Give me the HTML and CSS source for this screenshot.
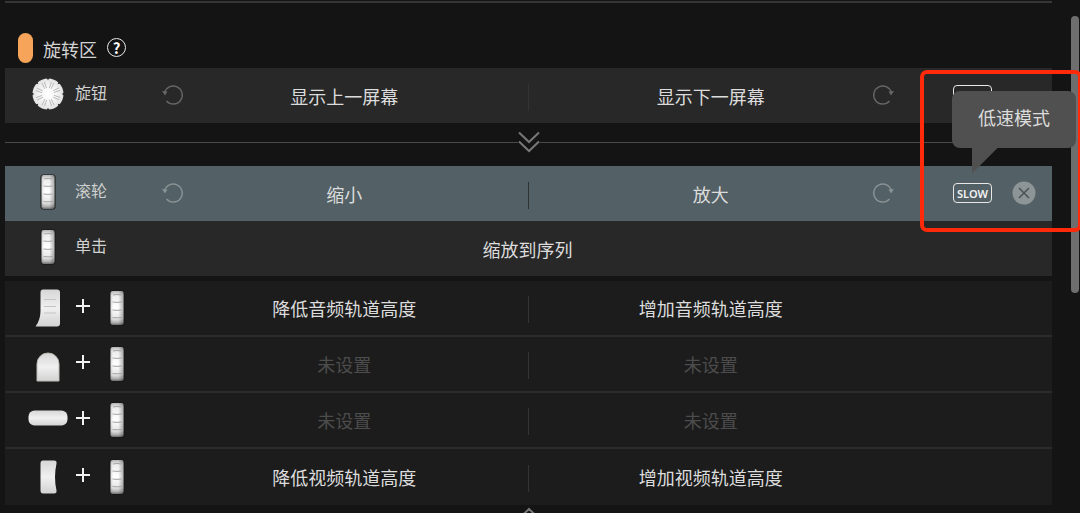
FILE: index.html
```html
<!DOCTYPE html>
<html lang="zh-CN">
<head>
    <meta charset="UTF-8">
    <meta name="viewport" content="width=device-width, initial-scale=1.0">
    <title>旋转区</title>
    <link rel="stylesheet" href="styles.css">
</head>
<body>
    <!-- Shared icons -->
    <svg class="icon-defs" aria-hidden="true">
        <defs>
            <linearGradient id="wheelFill" x1="0" y1="0" x2="0" y2="1">
                <stop offset="0" stop-color="#b4b4b4"/>
                <stop offset="0.12" stop-color="#ececec"/>
                <stop offset="0.5" stop-color="#ffffff"/>
                <stop offset="0.82" stop-color="#e4e4e4"/>
                <stop offset="0.93" stop-color="#b0b0b0"/>
                <stop offset="1" stop-color="#6c6c6c"/>
            </linearGradient>
            <linearGradient id="wheelSide" x1="0" y1="0" x2="1" y2="0">
                <stop offset="0" stop-color="#000" stop-opacity="0.15"/>
                <stop offset="0.2" stop-color="#000" stop-opacity="0"/>
                <stop offset="0.6" stop-color="#000" stop-opacity="0"/>
                <stop offset="1" stop-color="#000" stop-opacity="0.3"/>
            </linearGradient>
            <linearGradient id="keyFill" x1="0" y1="0" x2="0" y2="1">
                <stop offset="0" stop-color="#d6d6d6"/>
                <stop offset="0.5" stop-color="#f0f0f0"/>
                <stop offset="1" stop-color="#d2d2d2"/>
            </linearGradient>
            <radialGradient id="knobFill">
                <stop offset="0" stop-color="#ffffff"/>
                <stop offset="0.5" stop-color="#f6f6f6"/>
                <stop offset="1" stop-color="#e2e2e2"/>
            </radialGradient>
        </defs>
        <symbol id="wheel" viewBox="0 0 16 36">
            <rect x="0.500" y="0.500" width="15" height="35" rx="3" fill="#141414"/>
            <rect x="1.500" y="1" width="13" height="34" rx="2" fill="url(#wheelFill)"/>
            <rect x="1.500" y="1" width="13" height="34" rx="2" fill="url(#wheelSide)"/>
            <path d="M4 5q4-1 8 0M3.500 12q4.500 .800 9 0M3.500 20q4.500 .800 9 0M3.500 27.500q4.500 .800 9 0" fill="none" stroke="#9c9c9c" stroke-width="0.900"/>
        </symbol>
        <symbol id="rotate" viewBox="0 0 22 22">
            <path d="M2.500 9a9 9 0 1 1 2 8" fill="none" stroke="currentColor" stroke-width="1.400"/>
            <path d="M0 7l5.500.500-2.500 4z" fill="currentColor"/>
        </symbol>
        <symbol id="plus" viewBox="0 0 14 14">
            <path d="M7 0v14M0 7h14" stroke="#f2f2f2" stroke-width="2"/>
        </symbol>
    </svg>

    <main class="panel">
        <header class="section-header">
            <span class="section-mark"></span>
            <h2>旋转区</h2>
            <button class="help-button" type="button" aria-label="帮助">?</button>
        </header>

        <!-- Knob -->
        <div class="row row-main">
            <div class="key">
                <span class="key-icon">
                    <svg width="32" height="32" viewBox="0 0 32 32">
                        <circle cx="16" cy="16" r="15.500" fill="url(#knobFill)"/>
                        <g fill="none" stroke="#b0b0b0" stroke-width="0.800">
                            <g id="groove">
                                <path d="M15 10l-.300-6.500M17 10l.300-6.500" transform="rotate(22 16 16)"/>
                                <path d="M14.800 0h2.400l-1.200 2.200z" fill="#282828" stroke="none"/>
                            </g>
                            <use href="#groove" transform="rotate(45 16 16)"/>
                            <use href="#groove" transform="rotate(90 16 16)"/>
                            <use href="#groove" transform="rotate(135 16 16)"/>
                            <use href="#groove" transform="rotate(180 16 16)"/>
                            <use href="#groove" transform="rotate(225 16 16)"/>
                            <use href="#groove" transform="rotate(270 16 16)"/>
                            <use href="#groove" transform="rotate(315 16 16)"/>
                        </g>
                    </svg>
                </span>
                <span class="key-label">旋钮</span>
            </div>
            <div class="action">
                <svg class="turn turn-left"><use href="#rotate"/></svg>
                显示上一屏幕
            </div>
            <div class="action action-right">
                显示下一屏幕
                <svg class="turn turn-right"><use href="#rotate"/></svg>
            </div>
            <div class="tools">
                <button class="slow-button" type="button">SLOW</button>
            </div>
        </div>

        <div class="divider">
            <button class="fold-button" type="button" aria-label="展开">
                <svg width="22" height="22" viewBox="0 0 22 22">
                    <path d="M1 1.500l10 9.500 10-9.500M1 10.500l10 9.500 10-9.500" fill="none" stroke="#777" stroke-width="2"/>
                </svg>
            </button>
        </div>

        <!-- Wheel -->
        <div class="row row-main row-active">
            <div class="key">
                <span class="key-icon"><svg class="wheel"><use href="#wheel"/></svg></span>
                <span class="key-label">滚轮</span>
            </div>
            <div class="action">
                <svg class="turn turn-left"><use href="#rotate"/></svg>
                缩小
            </div>
            <div class="action action-right">
                放大
                <svg class="turn turn-right"><use href="#rotate"/></svg>
            </div>
            <div class="tools">
                <div class="slow-wrap">
                    <button class="slow-button" type="button" aria-describedby="slowTip">SLOW</button>
                    <div class="tooltip" id="slowTip" role="tooltip">低速模式</div>
                </div>
                <button class="clear-button" type="button" aria-label="清除">
                    <svg width="24" height="24" viewBox="0 0 24 24">
                        <circle cx="12" cy="12" r="11.500" fill="#8d9597"/>
                        <path d="M7 7l10 10M17 7L7 17" stroke="#485356" stroke-width="1.500"/>
                    </svg>
                </button>
            </div>
        </div>
        <div class="row row-main">
            <div class="key">
                <span class="key-icon"><svg class="wheel"><use href="#wheel"/></svg></span>
                <span class="key-label">单击</span>
            </div>
            <div class="action action-wide">缩放到序列</div>
        </div>

        <!-- Key + wheel -->
        <div class="combos">
            <div class="row">
                <div class="key">
                    <span class="key-icon">
                        <svg width="26" height="38" viewBox="0 0 26 38">
                            <path d="M8 .500h14q3 0 3 3v31q0 3-3 3H.500Q5.500 31 5.500 22V3.500Q5.500.500 8 .500z" fill="url(#keyFill)"/>
                            <path d="M9 10.500h12M9 17.500h12M9 24h12" stroke="#c4c4c4"/>
                        </svg>
                    </span>
                    <svg class="plus"><use href="#plus"/></svg>
                    <svg class="wheel"><use href="#wheel"/></svg>
                </div>
                <div class="action">降低音频轨道高度</div>
                <div class="action action-right">增加音频轨道高度</div>
            </div>
            <div class="row">
                <div class="key">
                    <span class="key-icon key-icon-low">
                        <svg width="24" height="30" viewBox="0 0 24 30">
                            <path d="M1 29V12a11 11 0 0 1 22 0v17z" fill="url(#keyFill)" stroke="#bcbcb4"/>
                        </svg>
                    </span>
                    <svg class="plus"><use href="#plus"/></svg>
                    <svg class="wheel"><use href="#wheel"/></svg>
                </div>
                <div class="action unset">未设置</div>
                <div class="action action-right unset">未设置</div>
            </div>
            <div class="row">
                <div class="key">
                    <span class="key-icon key-icon-high">
                        <svg width="40" height="16" viewBox="0 0 40 16">
                            <rect x="0.500" y="0.500" width="39" height="15" rx="6" fill="url(#keyFill)"/>
                        </svg>
                    </span>
                    <svg class="plus"><use href="#plus"/></svg>
                    <svg class="wheel"><use href="#wheel"/></svg>
                </div>
                <div class="action unset">未设置</div>
                <div class="action action-right unset">未设置</div>
            </div>
            <div class="row">
                <div class="key">
                    <span class="key-icon">
                        <svg width="17" height="34" viewBox="0 0 17 34">
                            <path d="M3 .500h11q3 0 2.500 3Q13.500 17 16.500 30.500q.500 3-2.500 3H3q-2.500 0-2.500-3v-27Q.500.500 3 .500z" fill="url(#keyFill)"/>
                        </svg>
                    </span>
                    <svg class="plus"><use href="#plus"/></svg>
                    <svg class="wheel"><use href="#wheel"/></svg>
                </div>
                <div class="action">降低视频轨道高度</div>
                <div class="action action-right">增加视频轨道高度</div>
            </div>
        </div>

        <div class="panel-end">
            <button class="fold-button" type="button" aria-label="收起">
                <svg width="22" height="22" viewBox="0 0 22 22">
                    <path d="M1 11.500L11 2l10 9.500M1 20.500L11 11l10 9.500" fill="none" stroke="#777" stroke-width="2"/>
                </svg>
            </button>
        </div>
    </main>

    <div class="scroll-thumb"></div>
    <div class="highlight"></div>
</body>
</html>
```

FILE: styles.css
```css
* {
    box-sizing: border-box;
}
body {
    position: relative;
    height: 100vh;
    margin: 0;
    overflow: hidden;
    background-color: #141414;
    color: #dcdcdc;
    font-family: "Noto Sans CJK SC", sans-serif;
    font-size: 18px;
    line-height: 24px;
}
button {
    padding: 0;
    border: none;
    background: none;
    color: inherit;
    font-family: inherit;
    cursor: pointer;
}
svg {
    display: block;
    flex: none;
}
.icon-defs {
    position: absolute;
    width: 0;
    height: 0;
}
.panel {
    margin: 1px 28px 0 5px;
    border-top: 2px solid #363636;
}
.section-header {
    display: flex;
    align-items: center;
    height: 65px;
    padding: 24px 0 0 13px;
}
.section-mark {
    width: 15px;
    height: 30px;
    border-radius: 8px;
    background-color: #f5a45a;
}
.section-header h2 {
    margin: 2px 10px 0 10px;
    color: #d2d2d2;
    font-size: 18px;
    font-weight: 400;
}
.help-button {
    width: 19px;
    height: 19px;
    border: 1px solid #e8e8e8;
    border-radius: 50%;
    color: #fff;
    font-size: 15px;
    font-weight: 700;
    line-height: 16px;
}

/* Rows */
.row {
    display: grid;
    grid-template-columns: 156px 1fr 1fr 158px;
    align-items: center;
    height: 56px;
    border-bottom: 2px solid #2b2b2b;
    background-color: #1c1c1c;
}
.row-main {
    height: 55px;
    border-bottom: none;
    background-color: #282828;
}
.row-active {
    background-color: #536065;
}
.key {
    display: flex;
    align-items: center;
    padding: 0 0 4px 22px;
}
.combos .key {
    padding-bottom: 0;
}
.key-icon {
    display: flex;
    justify-content: center;
    width: 42px;
}
.key-icon-low {
    padding-top: 6px;
}
.key-icon-high {
    padding-bottom: 4px;
}
.key-label {
    margin-left: 6px;
    padding-bottom: 4px;
    color: #d0d0d0;
    font-size: 16px;
}
.wheel {
    width: 16px;
    height: 36px;
}
.plus {
    width: 14px;
    height: 14px;
    margin: 0 19px 4px 7px;
}
.action {
    position: relative;
    text-align: center;
}
.action-right::before {
    content: '';
    position: absolute;
    top: 0;
    left: 0;
    width: 1px;
    height: 27px;
    background-color: #343434;
}
.action-wide {
    grid-column: 2 / 4;
}
.unset {
    color: #4c4c4c;
}
.turn {
    position: absolute;
    top: 0;
    width: 22px;
    height: 22px;
    color: #666;
}
.turn-left {
    left: 1px;
}
.turn-right {
    right: 0;
    transform: scaleX(-1);
}
.row-active .turn {
    color: #899295;
}
.row-active .action-right::before {
    background-color: #2d3233;
}

/* SLOW and clear */
.tools {
    display: flex;
    align-items: center;
    gap: 20px;
    padding: 0 0 2px 59px;
}
.slow-wrap {
    position: relative;
    display: flex;
}
.slow-button {
    width: 39px;
    height: 20px;
    border: 1px solid #e8e8e8;
    border-radius: 4px;
    color: #f2f2f2;
    font-family: "Noto Sans", sans-serif;
    font-size: 11px;
    font-weight: 600;
    line-height: 20px;
}
.tooltip {
    position: absolute;
    z-index: 3;
    bottom: 55px;
    left: -1px;
    width: 124px;
    padding: 14px 0 19px;
    border-radius: 8px;
    background-color: #505050;
    text-align: center;
    white-space: nowrap;
}
.tooltip::after {
    content: '';
    position: absolute;
    top: 100%;
    left: 20px;
    width: 26px;
    height: 26px;
    background-color: #505050;
    clip-path: polygon(0 0, 100% 0, 0 100%);
}

/* Dividers between groups */
.divider {
    display: flex;
    align-items: center;
    height: 43px;
    padding-bottom: 5px;
}
.divider::before,
.divider::after {
    content: '';
    flex: 1;
    height: 1px;
    background-color: #4a4a4a;
}
.combos {
    margin-top: 5px;
}
.combos .row:last-child {
    border-bottom: none;
}
.panel-end {
    display: flex;
    justify-content: center;
    padding-top: 2px;
}

/* Overlays */
.scroll-thumb {
    position: absolute;
    top: 16px;
    right: 1px;
    width: 8px;
    height: 277px;
    border-radius: 4px;
    background-color: #6e6e6e;
}
.highlight {
    position: absolute;
    top: 70px;
    right: -2px;
    width: 162px;
    height: 162px;
    border: 4px solid #ff2a0a;
    border-radius: 7px;
    pointer-events: none;
}
```
